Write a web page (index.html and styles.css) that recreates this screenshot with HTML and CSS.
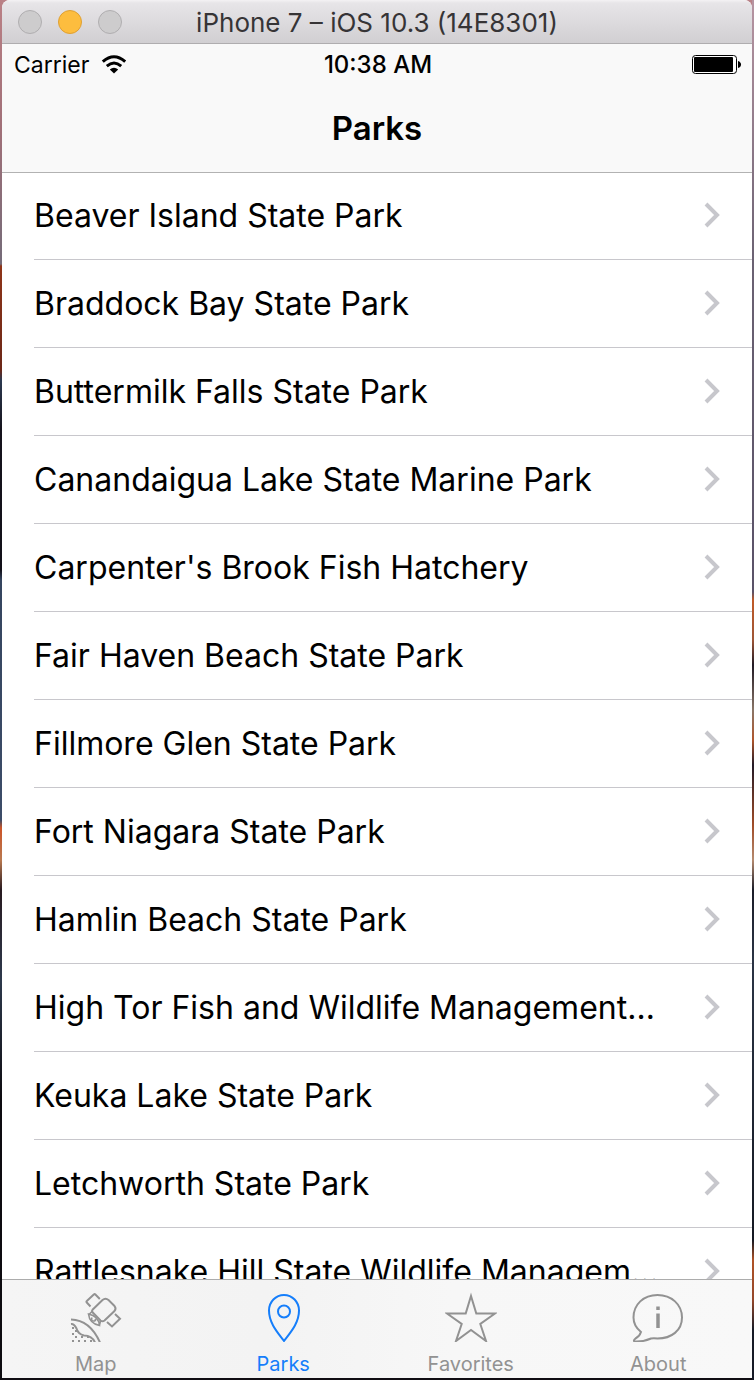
FILE: index.html
```html
<!DOCTYPE html>
<html lang="en">
<head>
<meta charset="utf-8">
<meta name="viewport" content="width=device-width, initial-scale=1">
<title>Parks</title>
<link rel="stylesheet" href="styles.css">
</head>
<body>
<div class="window">
  <div class="titlebar">
    <div class="lights">
      <button class="light" type="button" aria-label="Close"></button>
      <button class="light light-minimize" type="button" aria-label="Minimize"></button>
      <button class="light" type="button" aria-label="Zoom"></button>
    </div>
    <div class="window-title">iPhone 7 – iOS 10.3 (14E8301)</div>
  </div>
  <header class="header">
    <div class="status">
      <div class="carrier">
        <span>Carrier</span>
        <svg width="26" height="20" viewBox="0 0 26 20" aria-hidden="true">
          <path d="M1.800 6.700Q13-3.300 24.200 6.700M5.800 11.100Q13 4.900 20.200 11.100" fill="none" stroke="#000" stroke-width="3"/>
          <path d="M8.800 14.400Q13 10.900 17.200 14.400L13 18.600Z"/>
        </svg>
      </div>
      <div class="clock">10:38 AM</div>
      <div class="battery">
        <svg width="50" height="20" viewBox="0 0 50 20" aria-hidden="true">
          <rect x=".5" y=".5" width="44" height="18" rx="3" fill="#fff" stroke="#000"/>
          <rect x="2" y="2" width="39" height="15" rx="1"/>
          <path d="M46 6q3 1 3 3.500t-3 3.500z"/>
        </svg>
      </div>
    </div>
    <h1 class="nav-title">Parks</h1>
  </header>
  <main class="content">
    <ul class="parks">
      <li><a class="row" href="#"><span class="name">Beaver Island State Park</span><svg class="chevron" viewBox="0 0 16 26" aria-hidden="true"><path d="M2 2l11 11L2 24"/></svg></a></li>
      <li><a class="row" href="#"><span class="name">Braddock Bay State Park</span><svg class="chevron" viewBox="0 0 16 26" aria-hidden="true"><path d="M2 2l11 11L2 24"/></svg></a></li>
      <li><a class="row" href="#"><span class="name">Buttermilk Falls State Park</span><svg class="chevron" viewBox="0 0 16 26" aria-hidden="true"><path d="M2 2l11 11L2 24"/></svg></a></li>
      <li><a class="row" href="#"><span class="name">Canandaigua Lake State Marine Park</span><svg class="chevron" viewBox="0 0 16 26" aria-hidden="true"><path d="M2 2l11 11L2 24"/></svg></a></li>
      <li><a class="row" href="#"><span class="name">Carpenter's Brook Fish Hatchery</span><svg class="chevron" viewBox="0 0 16 26" aria-hidden="true"><path d="M2 2l11 11L2 24"/></svg></a></li>
      <li><a class="row" href="#"><span class="name">Fair Haven Beach State Park</span><svg class="chevron" viewBox="0 0 16 26" aria-hidden="true"><path d="M2 2l11 11L2 24"/></svg></a></li>
      <li><a class="row" href="#"><span class="name">Fillmore Glen State Park</span><svg class="chevron" viewBox="0 0 16 26" aria-hidden="true"><path d="M2 2l11 11L2 24"/></svg></a></li>
      <li><a class="row" href="#"><span class="name">Fort Niagara State Park</span><svg class="chevron" viewBox="0 0 16 26" aria-hidden="true"><path d="M2 2l11 11L2 24"/></svg></a></li>
      <li><a class="row" href="#"><span class="name">Hamlin Beach State Park</span><svg class="chevron" viewBox="0 0 16 26" aria-hidden="true"><path d="M2 2l11 11L2 24"/></svg></a></li>
      <li><a class="row" href="#"><span class="name">High Tor Fish and Wildlife Management…</span><svg class="chevron" viewBox="0 0 16 26" aria-hidden="true"><path d="M2 2l11 11L2 24"/></svg></a></li>
      <li><a class="row" href="#"><span class="name">Keuka Lake State Park</span><svg class="chevron" viewBox="0 0 16 26" aria-hidden="true"><path d="M2 2l11 11L2 24"/></svg></a></li>
      <li><a class="row" href="#"><span class="name">Letchworth State Park</span><svg class="chevron" viewBox="0 0 16 26" aria-hidden="true"><path d="M2 2l11 11L2 24"/></svg></a></li>
      <li><a class="row" href="#"><span class="name">Rattlesnake Hill State Wildlife Managem…</span><svg class="chevron" viewBox="0 0 16 26" aria-hidden="true"><path d="M2 2l11 11L2 24"/></svg></a></li>
    </ul>
  </main>
  <nav class="tabs">
    <a class="tab" href="#">
      <svg class="tab-icon" viewBox="0 0 52 52" aria-hidden="true">
        <path d="M20.500 16.500L16.800 12.500q-.8-.8 0-1.500l7-6.500q.8-.8 1.600 0L29.800 9"/>
        <path d="M22.500 19.800L32.500 10Q35.500 7.500 38.500 10L44.500 16Q46.500 18.500 44.500 21L34.500 30.500Q32.500 32 30.500 30.500L22.500 22.300Q21.500 21 22.500 19.800z"/>
        <path d="M45 24L50 28.800L42 36.500L37 32"/>
        <path stroke-width="1.600" d="M18.500 24Q19.500 33.500 29.500 35.500Q28.500 26 18.500 24zM19.500 24L22.500 21M29.500 35L30.500 31"/>
        <path stroke-width="1.600" d="M22 27.500Q20.500 31.500 24.500 31Q26 30.500 25 29"/>
        <path d="M1 29.500Q20 30 30 52.500M1 34Q4 33.500 6.500 38.500Q8 44 14 45.500Q22 45.500 25 52.500"/>
        <path stroke-width="2" stroke-dasharray="2 4" d="M2 38h3M5 41h3M2 44h3M5 47h14M2 51h20"/>
      </svg>
      <span>Map</span>
    </a>
    <a class="tab tab-active" href="#" aria-current="page">
      <svg class="tab-icon" viewBox="0 0 52 52" aria-hidden="true">
        <path d="M27 51C22 44 12 34 12 20.500A15 15.500 0 0 1 42 20.500C42 34 32 44 27 51z"/>
        <circle cx="27" cy="21.500" r="6"/>
      </svg>
      <span>Parks</span>
    </a>
    <a class="tab" href="#">
      <svg class="tab-icon" viewBox="0 0 52 52" aria-hidden="true">
        <path stroke-linejoin="miter" d="M26 6L31.300 23.500H50L35.300 34L41 51L26 40L11 51L16.700 34L2 23.500H20.700Z"/>
      </svg>
      <span>Favorites</span>
    </a>
    <a class="tab" href="#">
      <svg class="tab-icon" viewBox="0 0 52 52" aria-hidden="true">
        <path d="M9 42C4 38 1.500 33 1.500 27.500C1.500 14.500 11.500 5 25.500 5S50 14.500 50 27.500S39.500 48.500 25.500 48.500Q21.500 48 19 48.500Q11.500 52 2.500 51.500Q1 50.500 3.500 48.500Q7.500 46.500 9 42z"/>
        <path stroke-width="3.500" d="M26 23.500V38M26 16.500V20"/>
      </svg>
      <span>About</span>
    </a>
  </nav>
</div>
</body>
</html>
```
FILE: styles.css
```css
* {
  box-sizing: border-box;
}

body {
  height: 100vh;
  margin: 0;
  padding: 0 2px 2px;
  font-family: Inter, "Liberation Sans", sans-serif;
  color: #000;
  background-color: #100d13;
  background-image:
    linear-gradient(#ba8085, #a07078 130px, #746b78 264px, #8f3519 266px, #6b2718 370px, #2c3950 380px, #15131c 430px, #121019 570px, #35455f 580px, #3c4c68 820px, #cc5528 828px, #b97950 860px, #281a20 890px, #2d394c 980px, #0d0b10 1100px),
    linear-gradient(#b795a2, #6b6273 260px, #5a5268 592px, #c05a28 600px, #9e5637 640px, #221b26 665px, #8a7668 710px, #b0562c 740px, #241b28 765px, #a04c28 825px, #b58b70 860px, #1b1d29 890px, #2b3445 960px, #151923 1240px, #b05327 1260px, #94472b 1300px, #161a26 1330px),
    linear-gradient(#b98288, #b98288);
  background-position: left top, right top, left top;
  background-size: 2px 100%, 2px 100%, 100% 12px;
  background-repeat: no-repeat;
}

a {
  color: inherit;
  text-decoration: none;
}

.window {
  display: flex;
  flex-direction: column;
  height: 100%;
  overflow: hidden;
  border-radius: 8px 8px 0 0;
  background: #fff;
}

.titlebar {
  display: grid;
  grid-template-columns: 1fr auto 1fr;
  align-items: center;
  flex: none;
  height: 44px;
  padding: 0 16px;
  border-bottom: 1px solid #afadaf;
  background: linear-gradient(#f4f2f4, #e7e5e8 3px, #d1cfd2);
}

.lights {
  display: flex;
  gap: 16px;
}

.light {
  width: 24px;
  height: 24px;
  padding: 0;
  border: 1px solid #b0aeb0;
  border-radius: 50%;
  background: #cdcccd;
}

.light-minimize {
  border-color: #dfa033;
  background: #fdbd3e;
}

.window-title {
  padding-top: 2px;
  font-size: 26px;
  line-height: 32px;
  color: #363436;
}

.header {
  z-index: 1;
  flex: none;
  height: 129px;
  border-bottom: 1px solid #b2b2b2;
  background: #f9f9f9;
}

.status {
  display: grid;
  grid-template-columns: 1fr auto 1fr;
  align-items: center;
  height: 41px;
  padding: 0 10px 0 12px;
  font-size: 24px;
}

.carrier {
  display: flex;
  align-items: center;
  gap: 12px;
  font-size: 23px;
}

.clock {
  font-weight: 500;
}

.battery {
  display: flex;
  justify-content: flex-end;
}

.nav-title {
  margin: 0;
  font-size: 33px;
  font-weight: 600;
  line-height: 86px;
  text-align: center;
}

.content {
  flex: 1;
  min-height: 0;
  margin-top: -1px;
  overflow: hidden;
}

.parks {
  margin: 0;
  padding: 0 0 0 32px;
  list-style: none;
}

.row {
  display: flex;
  align-items: center;
  justify-content: space-between;
  gap: 16px;
  height: 88px;
  padding-right: 32px;
  border-bottom: 1px solid #c8c7cc;
}

.name {
  font-size: 32px;
  line-height: 44px;
  white-space: nowrap;
}

.chevron {
  flex: none;
  width: 16px;
  height: 26px;
  margin-bottom: 1px;
  fill: none;
  stroke: #c7c7cc;
  stroke-width: 4;
}

.tabs {
  display: grid;
  grid-template-columns: repeat(4, 1fr);
  flex: none;
  height: 99px;
  border-top: 1px solid #acacac;
  background: linear-gradient(90deg, #f5f5f5, #f3f3f3 35%, #f7f7f7 60%, #f8f8f8);
}

.tab {
  display: flex;
  flex-direction: column;
  align-items: center;
  gap: 8px;
  padding-top: 10px;
  font-size: 20px;
  line-height: 28px;
  color: #929292;
}

.tab-active {
  color: #157efb;
}

.tab-icon {
  width: 52px;
  height: 52px;
  fill: none;
  stroke: currentColor;
  stroke-width: 2;
}
```
